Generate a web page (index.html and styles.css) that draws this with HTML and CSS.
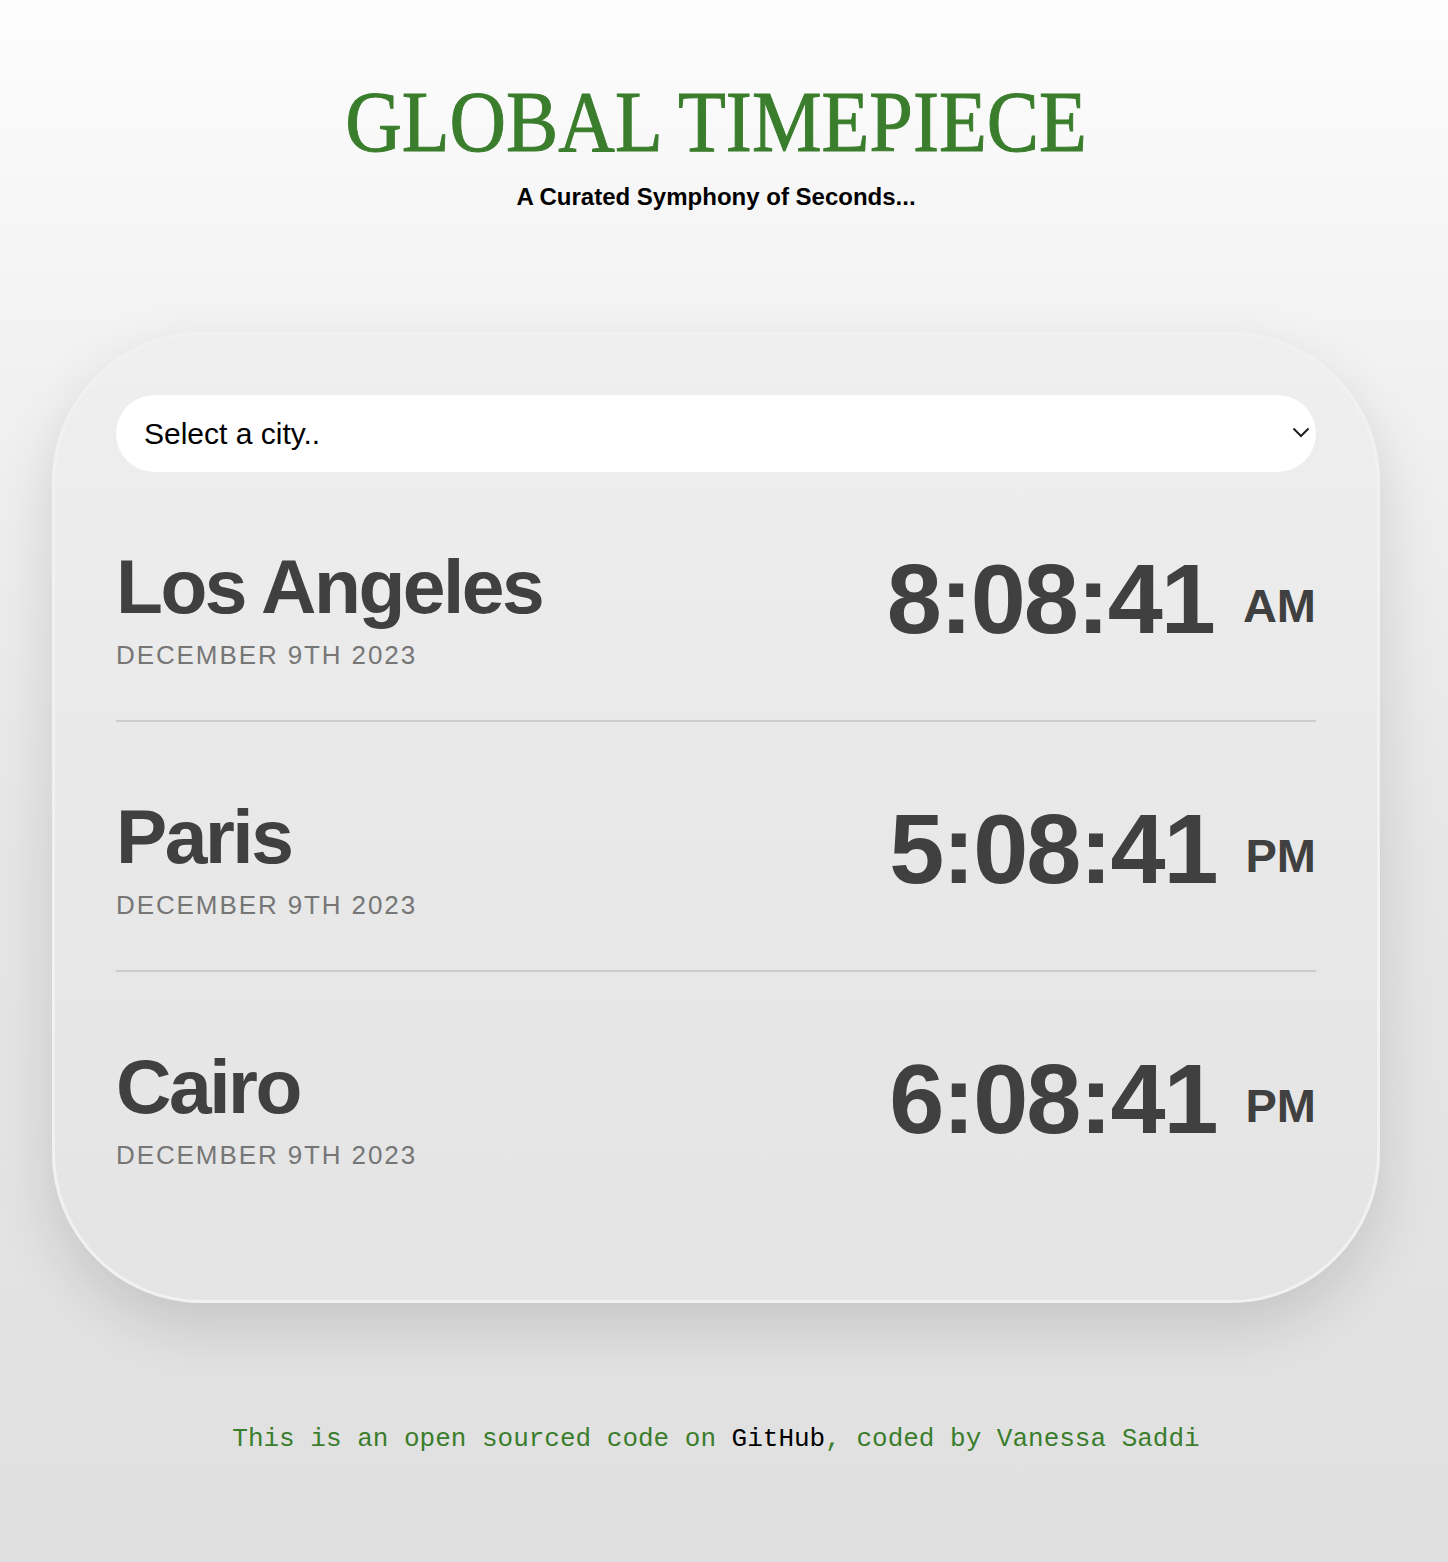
FILE: index.html
```html
<!DOCTYPE html>
<html lang="en">
<head>
<meta charset="utf-8">
<title>Global Timepiece</title>
<link rel="stylesheet" href="styles.css">
</head>
<body>
<div class="page">
  <header class="header">
    <h1 class="title"><span class="title-text">GLOBAL TIMEPIECE</span></h1>
    <p class="subtitle">A Curated Symphony of Seconds...</p>
  </header>

  <main class="card">
    <div class="select">
      <span class="select-label">Select a city..</span>
      <svg class="chevron" width="18" height="11" viewBox="0 0 18 11" aria-hidden="true">
        <polyline points="1.5,1.5 9,9 16.5,1.5" fill="none" stroke="#1e1e1e" stroke-width="2"/>
      </svg>
    </div>

    <div class="cities">
      <div class="city">
        <div class="city-info">
          <h2 class="city-name">Los Angeles</h2>
          <div class="city-date">DECEMBER 9TH 2023</div>
        </div>
        <div class="city-time">
          <span class="time">8:08:41</span>
          <span class="ampm">AM</span>
        </div>
      </div>
      <div class="city">
        <div class="city-info">
          <h2 class="city-name">Paris</h2>
          <div class="city-date">DECEMBER 9TH 2023</div>
        </div>
        <div class="city-time">
          <span class="time">5:08:41</span>
          <span class="ampm">PM</span>
        </div>
      </div>
      <div class="city">
        <div class="city-info">
          <h2 class="city-name">Cairo</h2>
          <div class="city-date">DECEMBER 9TH 2023</div>
        </div>
        <div class="city-time">
          <span class="time">6:08:41</span>
          <span class="ampm">PM</span>
        </div>
      </div>
    </div>
  </main>

  <footer class="footer">
    This is an open sourced code on <a class="footer-link" href="#">GitHub</a>, coded by Vanessa Saddi
  </footer>
</div>
</body>
</html>
```

FILE: styles.css
```css
html {
  min-height: 100%;
  background: linear-gradient(180deg, #fdfdfd 0%, #f2f2f2 22%, #e6e6e6 55%, #e0e0e0 100%);
}

body {
  margin: 0;
  min-height: 1562px;
  font-family: "Liberation Sans", Arial, sans-serif;
}

.page {
  padding: 0 16px 0 0;
  box-sizing: border-box;
  width: 1448px;
}

.header {
  text-align: center;
  padding-top: 71px;
}

.title {
  margin: 0;
  font-family: "Liberation Serif", "Times New Roman", serif;
  font-weight: 400;
  font-size: 87px;
  line-height: normal;
  color: #3a7d2c;
  -webkit-text-stroke: 1px #3a7d2c;
}

.title-text {
  display: inline-block;
  transform: scaleX(0.9);
  transform-origin: center;
}

.subtitle {
  margin: 11px 0 0;
  font-size: 24px;
  font-weight: 700;
  color: #000;
  line-height: normal;
}

.card {
  box-sizing: border-box;
  width: 1328px;
  margin: 121px auto 0;
  padding: 60px 61px 80px;
  border: 3px solid #f1f1f1;
  border-radius: 150px;
  background: linear-gradient(180deg, #efefef 0%, #e9e9e9 45%, #e4e4e4 100%);
  box-shadow: 0 24px 60px rgba(0, 0, 0, 0.13);
}

.select {
  display: flex;
  align-items: center;
  justify-content: space-between;
  height: 77px;
  padding: 0 6px 0 28px;
  background: #fff;
  border-radius: 39px;
}

.select-label {
  font-size: 30px;
  color: #000;
}

.chevron {
  display: block;
  margin-top: -2px;
}

.city {
  display: flex;
  justify-content: space-between;
  align-items: flex-start;
  box-sizing: border-box;
  height: 250px;
  padding-top: 70px;
  border-bottom: 2px solid #cccccc;
}

.city:last-child {
  border-bottom: none;
  height: 248px;
}

.city-name {
  margin: 0;
  font-size: 76.8px;
  font-weight: 700;
  letter-spacing: -2.5px;
  line-height: normal;
  color: #404040;
}

.city-date {
  margin-top: 9px;
  font-size: 26px;
  letter-spacing: 1.9px;
  color: #767676;
  line-height: normal;
}

.city-time {
  display: flex;
  align-items: flex-start;
  color: #404040;
  font-weight: 700;
}

.time {
  font-size: 99px;
  letter-spacing: -2px;
  line-height: normal;
}

.ampm {
  margin-left: 29px;
  margin-top: 36px;
  font-size: 47px;
  line-height: normal;
}

.footer {
  margin-top: 121px;
  text-align: center;
  font-family: "Liberation Mono", "Courier New", monospace;
  font-size: 26px;
  color: #3a7d2c;
  line-height: normal;
}

.footer-link {
  color: #000;
  text-decoration: none;
}
```
